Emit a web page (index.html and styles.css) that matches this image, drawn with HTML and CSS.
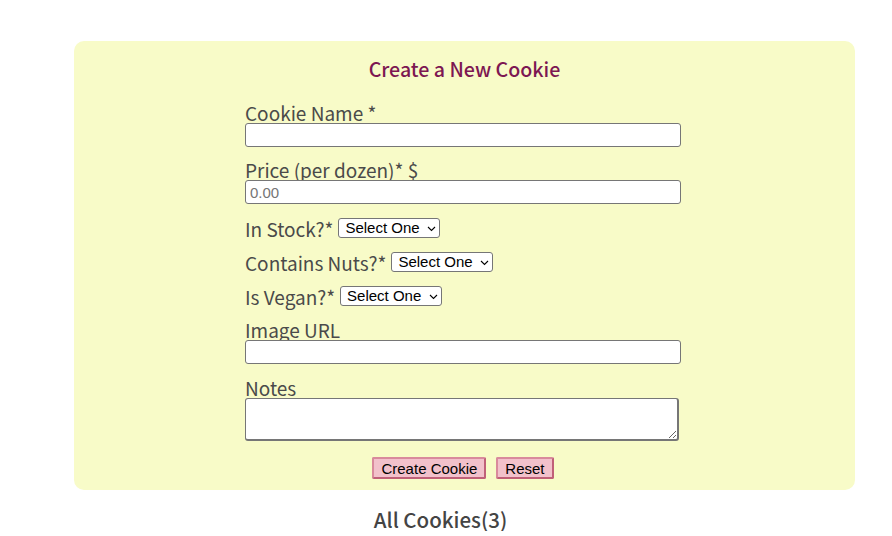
FILE: index.html
```html
<!DOCTYPE html>
<html lang="en">
<head>
<meta charset="utf-8">
<title>Cookies</title>
<link rel="stylesheet" href="styles.css">
</head>
<body>
<main class="page">
  <section class="card">
    <h2 class="card-title">Create a New Cookie</h2>
    <form class="form">
      <div class="group">
        <label class="label" for="name">Cookie Name *</label>
        <input class="input" id="name" type="text">
      </div>
      <div class="group">
        <label class="label" for="price">Price (per dozen)* $</label>
        <input class="input" id="price" type="text" placeholder="0.00">
      </div>
      <div class="row">
        <label class="label" for="stock">In Stock?*</label>
        <span class="select-wrap">
          <select class="select" id="stock"><option>Select One</option></select>
          <svg class="chev" width="9" height="6" viewBox="0 0 9 6"><path d="M1 1l3.5 3.5L8 1" fill="none" stroke="#000" stroke-width="1.1"/></svg>
        </span>
      </div>
      <div class="row">
        <label class="label" for="nuts">Contains Nuts?*</label>
        <span class="select-wrap">
          <select class="select" id="nuts"><option>Select One</option></select>
          <svg class="chev" width="9" height="6" viewBox="0 0 9 6"><path d="M1 1l3.5 3.5L8 1" fill="none" stroke="#000" stroke-width="1.1"/></svg>
        </span>
      </div>
      <div class="row">
        <label class="label" for="vegan">Is Vegan?*</label>
        <span class="select-wrap">
          <select class="select" id="vegan"><option>Select One</option></select>
          <svg class="chev" width="9" height="6" viewBox="0 0 9 6"><path d="M1 1l3.5 3.5L8 1" fill="none" stroke="#000" stroke-width="1.1"/></svg>
        </span>
      </div>
      <div class="group group-url">
        <label class="label" for="url">Image URL</label>
        <input class="input" id="url" type="text">
      </div>
      <div class="group">
        <label class="label" for="notes">Notes</label>
        <textarea class="textarea" id="notes"></textarea>
      </div>
      <div class="actions">
        <button class="btn" type="button">Create Cookie</button>
        <button class="btn" type="reset">Reset</button>
      </div>
    </form>
  </section>
  <h2 class="list-title">All Cookies(3)</h2>
</main>
</body>
</html>
```

FILE: styles.css
```css
html, body {
  margin: 0;
  background: #ffffff;
}
.page {
  padding: 41px 37px 0 74px;
  font-family: "Noto Sans CJK KR", "Noto Sans", sans-serif;
  color: #4a4a4a;
}
.card {
  background: #f8fbc8;
  border-radius: 10px;
  padding: 14px 0 11px;
}
.card-title {
  margin: 0 0 19px;
  text-align: center;
  font-size: 19.6px;
  line-height: 28px;
  font-weight: 500;
  color: #7d1752;
}
.form {
  width: 436px;
  margin-left: 171px;
  display: flex;
  flex-direction: column;
}
.group {
  display: flex;
  flex-direction: column;
  margin-bottom: 12px;
}
.group-url {
  margin-top: 1px;
  margin-bottom: 13px;
}
.label {
  font-size: 19px;
  line-height: 21px;
  height: 21px;
}
.input {
  box-sizing: border-box;
  width: 436px;
  height: 24px;
  margin: 0;
  border: 1px solid #767676;
  border-radius: 3px;
  background: #fff;
  padding: 0 4px;
  font-family: "Liberation Sans", Arial, sans-serif;
  font-size: 15px;
  color: #000;
}
.input::placeholder {
  color: #757575;
}
.textarea {
  box-sizing: border-box;
  width: 434px;
  height: 43px;
  margin: 0;
  border: 1px solid #767676;
  border-right-width: 2px;
  border-bottom-width: 2px;
  border-radius: 3px;
  background: #fff;
  resize: vertical;
  font-family: "Liberation Sans", Arial, sans-serif;
}
.row {
  display: flex;
  align-items: center;
  gap: 5px;
  height: 24px;
  margin-bottom: 10px;
}
.select-wrap {
  position: relative;
  display: inline-flex;
}
.select {
  -webkit-appearance: none;
  appearance: none;
  box-sizing: border-box;
  height: 20px;
  width: 102px;
  margin: 0;
  padding: 0 16px 0 6px;
  border: 1px solid #767676;
  border-radius: 3px;
  background: #fff;
  font-family: "Liberation Sans", Arial, sans-serif;
  font-size: 15px;
  line-height: 18px;
  color: #000;
}
.chev {
  position: absolute;
  right: 4px;
  top: 8px;
  pointer-events: none;
}
.actions {
  display: flex;
  justify-content: center;
  gap: 10px;
  margin-top: 4px;
}
.btn {
  box-sizing: border-box;
  height: 22px;
  margin: 0;
  padding: 0 7px;
  border: 2px solid #c06078;
  border-top-color: #d98a9c;
  border-left-color: #d98a9c;
  border-radius: 2px;
  background: #f2c1cb;
  font-family: "Liberation Sans", Arial, sans-serif;
  font-size: 15px;
  color: #000;
}
.list-title {
  margin: 17px 0 0;
  padding-right: 48px;
  text-align: center;
  font-size: 20.5px;
  line-height: 24px;
  font-weight: 500;
  color: #444;
}
```
